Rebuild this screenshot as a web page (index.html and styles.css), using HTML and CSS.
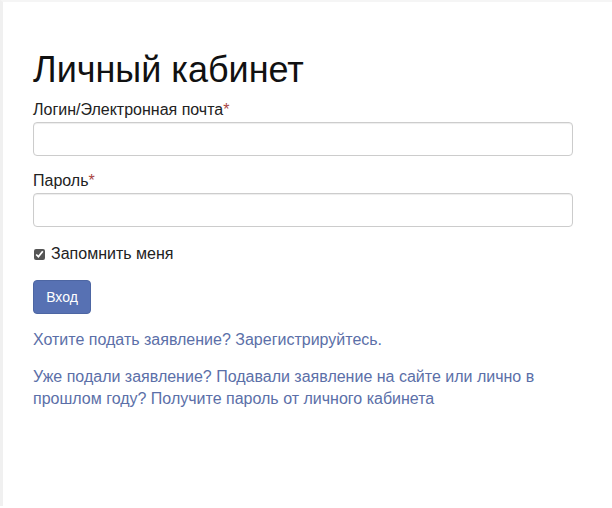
FILE: index.html
```html
<!DOCTYPE html>
<html lang="ru">
<head>
<meta charset="utf-8">
<link rel="stylesheet" href="styles.css">
</head>
<body>
<div class="page">
  <div class="content">
    <h1 class="title">Личный кабинет</h1>
    <form class="form">
      <div class="group">
        <label class="label">Логин/Электронная почта<span class="req">*</span></label>
        <input class="input" type="text">
      </div>
      <div class="group">
        <label class="label">Пароль<span class="req">*</span></label>
        <input class="input" type="password">
      </div>
      <label class="check"><input type="checkbox" checked class="cb"> Запомнить меня</label>
      <button type="button" class="btn">Вход</button>
    </form>
    <p class="link">Хотите подать заявление? Зарегистрируйтесь.</p>
    <p class="link">Уже подали заявление? Подавали заявление на сайте или лично в прошлом году? Получите пароль от личного кабинета</p>
  </div>
</div>
</body>
</html>
```
FILE: styles.css
```css
html, body { margin: 0; padding: 0; background: #fff; }
body { font-family: "Liberation Sans", Arial, sans-serif; color: #222; }
.page {
  border-left: 3px solid #f0f0f0;
  border-top: 2px solid #f5f5f5;
  min-height: 506px;
  box-sizing: border-box;
}
.content { padding: 0 39px 0 30px; width: 540px; }
.title {
  font-size: 36px; font-weight: 400; margin: 0; padding-top: 48px;
  line-height: 40px; color: #111;
}
.form { margin-top: 10px; }
.group { margin-bottom: 15px; }
.label { display: block; font-size: 16px; line-height: 20px; margin-bottom: 2px; color: #222; }
.req { color: #a94442; }
.input {
  display: block; width: 540px; height: 34px; box-sizing: border-box;
  border: 1px solid #ccc; border-radius: 4px; background: #fff; margin: 0;
  box-shadow: inset 0 1px 1px rgba(0,0,0,.075);
}
.check { display: flex; align-items: center; font-size: 16px; line-height: 20px; padding-top: 2px; color: #222; }
.cb { margin: 0 6px 0 1px; width: 11px; height: 11px; accent-color: #555; }
.btn {
  display: block; margin-top: 16px; height: 34px; width: 58px; box-sizing: border-box;
  background: #5771b3; color: #fff; border: 1px solid #4d66a3; border-radius: 4px;
  font-family: "Liberation Sans", Arial, sans-serif; font-size: 14px; padding: 0;
}
.link { font-size: 16px; line-height: 22px; color: #5b6fa8; margin: 15px 0 0; }
.link + .link { margin-top: 15px; }
```
